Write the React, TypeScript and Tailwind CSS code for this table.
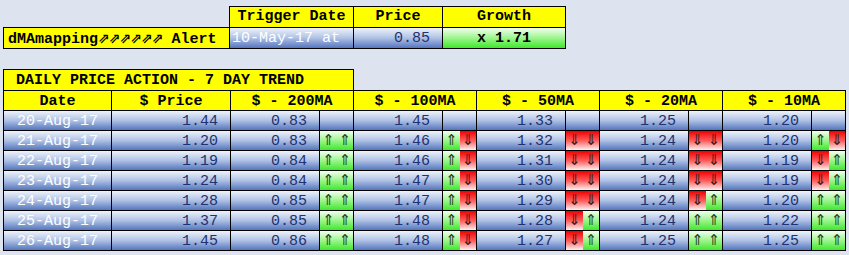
import React from "react";

const mono = "font-['Liberation_Mono','DejaVu_Sans_Mono',monospace]";
const blue = "bg-[linear-gradient(180deg,#eef3fb_0%,#aec1e5_50%,#5575bd_100%)]";
const green = "bg-[linear-gradient(180deg,#f2fff0_0%,#9cf58c_50%,#3fe82c_100%)]";
const red = "bg-[linear-gradient(180deg,#f00000_0%,#ff5a5a_50%,#fff0f0_100%)]";

type Arrow = "u" | "d";
type Row = { date: string; price: string; ma: { v: string; a?: [Arrow, Arrow] }[] };

const rows: Row[] = [
  { date: "20-Aug-17", price: "1.44", ma: [{ v: "0.83" }, { v: "1.45" }, { v: "1.33" }, { v: "1.25" }, { v: "1.20" }] },
  { date: "21-Aug-17", price: "1.20", ma: [{ v: "0.83", a: ["u", "u"] }, { v: "1.46", a: ["u", "d"] }, { v: "1.32", a: ["d", "d"] }, { v: "1.24", a: ["d", "d"] }, { v: "1.20", a: ["u", "d"] }] },
  { date: "22-Aug-17", price: "1.19", ma: [{ v: "0.84", a: ["u", "u"] }, { v: "1.46", a: ["u", "d"] }, { v: "1.31", a: ["d", "d"] }, { v: "1.24", a: ["d", "d"] }, { v: "1.19", a: ["d", "u"] }] },
  { date: "23-Aug-17", price: "1.24", ma: [{ v: "0.84", a: ["u", "u"] }, { v: "1.47", a: ["u", "d"] }, { v: "1.30", a: ["d", "d"] }, { v: "1.24", a: ["d", "d"] }, { v: "1.19", a: ["d", "u"] }] },
  { date: "24-Aug-17", price: "1.28", ma: [{ v: "0.85", a: ["u", "u"] }, { v: "1.47", a: ["u", "d"] }, { v: "1.29", a: ["d", "d"] }, { v: "1.24", a: ["d", "u"] }, { v: "1.20", a: ["u", "u"] }] },
  { date: "25-Aug-17", price: "1.37", ma: [{ v: "0.85", a: ["u", "u"] }, { v: "1.48", a: ["u", "d"] }, { v: "1.28", a: ["d", "u"] }, { v: "1.24", a: ["u", "u"] }, { v: "1.22", a: ["u", "u"] }] },
  { date: "26-Aug-17", price: "1.45", ma: [{ v: "0.86", a: ["u", "u"] }, { v: "1.48", a: ["u", "d"] }, { v: "1.27", a: ["d", "u"] }, { v: "1.25", a: ["u", "u"] }, { v: "1.25", a: ["u", "u"] }] },
];

const heads = ["$ - 200MA", "$ - 100MA", "$ - 50MA", "$ - 20MA", "$ - 10MA"];

function Half({ dir }: { dir: Arrow }) {
  return (
    <div className={`flex-1 flex items-center justify-center font-['DejaVu_Sans',sans-serif] text-[15px] leading-none ${dir === "u" ? `${green} text-[#24401a]` : `${red} text-[#3d1c1c]`}`}>
      {dir === "u" ? "⇑" : "⇓"}
    </div>
  );
}

export default function App() {
  return (
    <div className={`min-h-screen w-full bg-[#dde4f0] ${mono} text-[15px] leading-[19px] pl-[3px] pt-[6px]`}>
      {/* alert header */}
      <div className="ml-[226px] flex w-fit border-t border-l border-black">
        <div className="w-[124px] h-[20px] border-r border-black bg-[#ffff00] font-bold text-center">Trigger Date</div>
        <div className="w-[89px] h-[20px] border-r border-black bg-[#ffff00] font-bold text-center">Price</div>
        <div className="w-[123px] h-[20px] border-r border-black bg-[#ffff00] font-bold text-center">Growth</div>
      </div>
      <div className="flex w-fit border-t border-l border-b border-black">
        <div className="w-[226px] h-[20px] border-r border-black bg-[#ffff00] font-bold pl-[4px] pt-px whitespace-nowrap">
          dMAmapping<span className="font-['DejaVu_Sans',sans-serif] text-[14px] font-bold tracking-[-1px]">⇗⇗⇗⇗⇗⇗</span> Alert
        </div>
        <div className={`w-[124px] h-[20px] border-r border-black ${blue} text-white pl-[2px] pt-px`}>10-May-17 at</div>
        <div className={`w-[89px] h-[20px] border-r border-black ${blue} text-[#1f3170] text-right pr-[12px] pt-px`}>0.85</div>
        <div className={`w-[123px] h-[20px] border-r border-black ${green} font-bold text-center pt-px`}>x 1.71</div>
      </div>

      {/* trend table */}
      <div className="mt-[20px] flex w-fit border-t border-l border-black">
        <div className="w-[350px] h-[20px] border-r border-black bg-[#ffff00] font-bold pl-[12px] pt-px">DAILY PRICE ACTION - 7 DAY TREND</div>
      </div>
      <div className="grid w-fit grid-cols-[108px_119px_123px_123px_123px_123px_123px] border-t border-l border-black">
        <div className="h-[20px] border-r border-b border-black bg-[#ffff00] font-bold text-center pt-px">Date</div>
        <div className="h-[20px] border-r border-b border-black bg-[#ffff00] font-bold text-center pt-px">$ Price</div>
        {heads.map(h => (
          <div key={h} className="h-[20px] border-r border-b border-black bg-[#ffff00] font-bold text-center pt-px">{h}</div>
        ))}
        {rows.map(r => (
          <React.Fragment key={r.date}>
            <div className={`h-[20px] border-r border-b border-black ${blue} text-white text-center pt-px`}>{r.date}</div>
            <div className={`h-[20px] border-r border-b border-black ${blue} text-[#1f3170] text-right pr-[12px] pt-px`}>{r.price}</div>
            {r.ma.map((m, i) => (
              <div key={i} className="h-[20px] flex">
                <div className={`w-[89px] border-r border-b border-black ${blue} text-[#1f3170] text-right pr-[12px] pt-px`}>{m.v}</div>
                <div className={`w-[34px] flex border-r border-b border-black ${m.a ? "" : blue}`}>
                  {m.a && (<><Half dir={m.a[0]} /><Half dir={m.a[1]} /></>)}
                </div>
              </div>
            ))}
          </React.Fragment>
        ))}
      </div>
    </div>
  );
}
